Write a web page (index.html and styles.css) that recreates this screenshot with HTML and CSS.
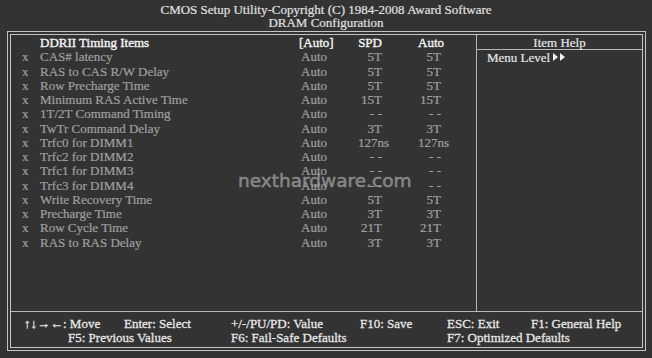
FILE: index.html
```html
<!DOCTYPE html>
<html>
<head>
<meta charset="utf-8">
<link rel="stylesheet" href="styles.css">
</head>
<body>
<div class="page">
  <div class="title">
    <div>CMOS Setup Utility-Copyright (C) 1984-2008 Award Software</div>
    <div>DRAM Configuration</div>
  </div>
  <div class="frame">
    <div class="inner">
      <div class="main">
        <div class="items">
          <div class="row head"><span class="mark"></span><span class="name">DDRII Timing Items</span><span class="val bracket">[Auto]</span><span class="spd">SPD</span><span class="cur">Auto</span></div>
          <div class="row"><span class="mark">x</span><span class="name">CAS# latency</span><span class="val">Auto</span><span class="spd">5T</span><span class="cur">5T</span></div>
          <div class="row"><span class="mark">x</span><span class="name">RAS to CAS R/W Delay</span><span class="val">Auto</span><span class="spd">5T</span><span class="cur">5T</span></div>
          <div class="row"><span class="mark">x</span><span class="name">Row Precharge Time</span><span class="val">Auto</span><span class="spd">5T</span><span class="cur">5T</span></div>
          <div class="row"><span class="mark">x</span><span class="name">Minimum RAS Active Time</span><span class="val">Auto</span><span class="spd">15T</span><span class="cur">15T</span></div>
          <div class="row"><span class="mark">x</span><span class="name">1T/2T Command Timing</span><span class="val">Auto</span><span class="spd">- -</span><span class="cur">- -</span></div>
          <div class="row"><span class="mark">x</span><span class="name">TwTr Command Delay</span><span class="val">Auto</span><span class="spd">3T</span><span class="cur">3T</span></div>
          <div class="row"><span class="mark">x</span><span class="name">Trfc0 for DIMM1</span><span class="val">Auto</span><span class="spd">127ns</span><span class="cur">127ns</span></div>
          <div class="row"><span class="mark">x</span><span class="name">Trfc2 for DIMM2</span><span class="val">Auto</span><span class="spd">- -</span><span class="cur">- -</span></div>
          <div class="row"><span class="mark">x</span><span class="name">Trfc1 for DIMM3</span><span class="val">Auto</span><span class="spd">- -</span><span class="cur">- -</span></div>
          <div class="row"><span class="mark">x</span><span class="name">Trfc3 for DIMM4</span><span class="val">Auto</span><span class="spd">- -</span><span class="cur">- -</span></div>
          <div class="row"><span class="mark">x</span><span class="name">Write Recovery Time</span><span class="val">Auto</span><span class="spd">5T</span><span class="cur">5T</span></div>
          <div class="row"><span class="mark">x</span><span class="name">Precharge Time</span><span class="val">Auto</span><span class="spd">3T</span><span class="cur">3T</span></div>
          <div class="row"><span class="mark">x</span><span class="name">Row Cycle Time</span><span class="val">Auto</span><span class="spd">21T</span><span class="cur">21T</span></div>
          <div class="row"><span class="mark">x</span><span class="name">RAS to RAS Delay</span><span class="val">Auto</span><span class="spd">3T</span><span class="cur">3T</span></div>
        </div>
        <div class="help">
          <div class="help-head">Item Help</div>
          <div class="help-body">Menu Level<svg class="tri" width="12" height="8" viewBox="0 0 12 8"><polygon points="0,0 5,4 0,8" fill="#f2f2f2"/><polygon points="7,0 12,4 7,8" fill="#f2f2f2"/></svg></div>
        </div>
      </div>
      <div class="footer">
        <span>↑↓→←: Move</span>
        <span>Enter: Select</span>
        <span>+/-/PU/PD: Value</span>
        <span>F10: Save</span>
        <span>ESC: Exit</span>
        <span>F1: General Help</span>
        <span class="f5">F5: Previous Values</span>
        <span class="f6">F6: Fail-Safe Defaults</span>
        <span class="f7">F7: Optimized Defaults</span>
      </div>
    </div>
  </div>
  <div class="watermark">nexthardware.com</div>
</div>
</body>
</html>
```
FILE: styles.css
```css
html, body {
  margin: 0;
  padding: 0;
  background: #333333;
}
.page {
  position: relative;
  width: 652px;
  height: 358px;
  overflow: hidden;
  font-family: "Liberation Serif", "Times New Roman", serif;
  font-size: 13px;
  color: #a0a0a0;
  -webkit-text-stroke: 0.2px currentColor;
}
.title {
  padding-top: 3px;
  line-height: 13px;
  text-align: center;
  color: #e0e0e0;
}
.frame {
  margin: 2px 6px 0 7px;
  border: 1px solid #c4c4c4;
  padding: 2px;
}
.inner {
  border: 1px solid #c4c4c4;
}
.main {
  display: flex;
  height: 276px;
  border-bottom: 1px solid #b8b8b8;
}
.items {
  width: 454px;
  padding: 1px 0 0 11px;
  border-right: 1px solid #b8b8b8;
}
.row {
  display: grid;
  grid-template-columns: 18px 261px 57px 60px 23px;
  line-height: 14.25px;
  white-space: nowrap;
}
.row .spd {
  padding-right: 36px;
  text-align: right;
}
.row .cur {
  text-align: right;
}
.row.head {
  color: #f6f6f6;
  -webkit-text-stroke: 0.35px currentColor;
}
.row .bracket {
  margin-left: -2px;
}
.help {
  flex: 1;
  color: #e6e6e6;
}
.help-head {
  height: 13px;
  padding-top: 1px;
  line-height: 13px;
  text-align: center;
  border-bottom: 1px solid #b8b8b8;
}
.help-body {
  padding-left: 10px;
  line-height: 13px;
  padding-top: 1px;
  display: flex;
  align-items: center;
}
.tri {
  margin-left: 3px;
  margin-top: -1px;
}
.footer {
  display: grid;
  grid-template-columns: 100px 107px 129px 87px 84px 1fr;
  padding: 5px 0 3px 13px;
  line-height: 13.5px;
  color: #e6e6e6;
  white-space: nowrap;
  -webkit-text-stroke: 0.3px currentColor;
}
.footer .f5 {
  grid-column: 1 / 3;
  padding-left: 44px;
}
.footer .f6 {
  grid-column: 3 / 5;
}
.footer .f7 {
  grid-column: 5 / 7;
}
.watermark {
  position: absolute;
  left: 238px;
  top: 171px;
  font-family: "DejaVu Sans", sans-serif;
  font-size: 18.5px;
  line-height: 20px;
  color: rgba(150, 150, 150, 0.8);
  -webkit-text-stroke: 0.6px rgba(150, 150, 150, 0.8);
}
```
